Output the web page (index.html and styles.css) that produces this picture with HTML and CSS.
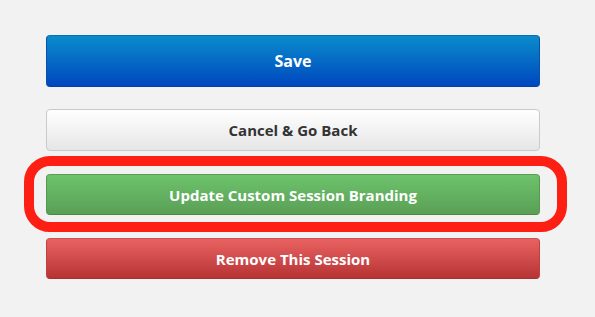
FILE: index.html
```html
<!DOCTYPE html>
<html lang="en">

<head>
    <meta charset="UTF-8">
    <meta name="viewport" content="width=device-width, initial-scale=1.0">
    <title>Session Actions</title>
    <link rel="stylesheet" href="styles.css">
</head>

<body>
    <div class="actions">
        <button class="btn btn-save">Save</button>
        <button class="btn btn-cancel">Cancel &amp; Go Back</button>
        <div class="highlight">
            <button class="btn btn-branding">Update Custom Session Branding</button>
        </div>
        <button class="btn btn-remove">Remove This Session</button>
    </div>
</body>

</html>
```

FILE: styles.css
```css
body {
    font-family: "Open Sans", "DejaVu Sans", sans-serif;
    background-color: #f2f2f2;
    margin: 0;
    padding: 35px 55px 0 46px;
}

.actions {
    width: 494px;
    display: flex;
    flex-direction: column;
    gap: 22px;
}

.btn {
    display: block;
    width: 100%;
    height: 41px;
    font-family: inherit;
    font-size: 15px;
    font-weight: 700;
    color: #fff;
    border: 1px solid transparent;
    border-radius: 4px;
    cursor: pointer;
    padding: 0;
}

.btn-save {
    height: 52px;
    font-size: 16px;
    background: linear-gradient(#0a8ccb, #0047bf);
    border-color: #0a6fb0 #0850a8 #0740a0;
}

.btn-cancel {
    height: 42px;
    color: #333;
    background: linear-gradient(#ffffff, #e6e6e6);
    border-color: #cacaca;
}

.highlight {
    position: relative;
    margin-top: 1px;
}

.highlight::after {
    content: "";
    position: absolute;
    left: -22px;
    right: -27px;
    top: -18px;
    bottom: -17px;
    border: 10px solid #fe1f14;
    border-radius: 26px;
    pointer-events: none;
}

.btn-branding {
    background: linear-gradient(#6dc36b, #5a9f56);
    border-color: #5a9e55 #57974f #4a8a46;
}

.btn-remove {
    margin-top: 1px;
    background: linear-gradient(#e96262, #b73434);
    border-color: #d04f4f #c04040 #a83030;
}
```
